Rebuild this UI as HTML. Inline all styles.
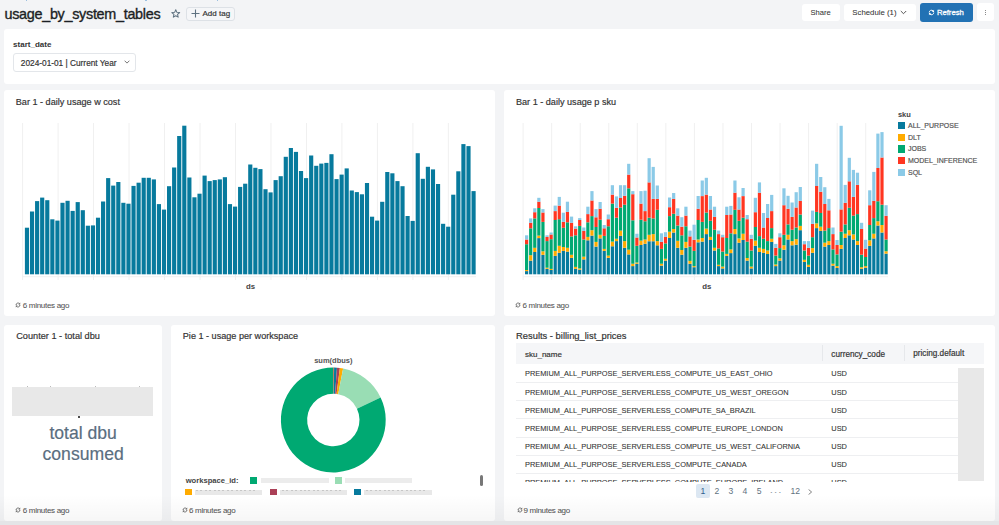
<!DOCTYPE html>
<html><head><meta charset="utf-8"><style>
html,body{margin:0;padding:0}
body{width:999px;height:525px;overflow:hidden;position:relative;background:#F3F4F6;font-family:"Liberation Sans",sans-serif;color:#333}
.p{position:absolute;background:#fff;border-radius:3px}
.t{position:absolute;white-space:nowrap;line-height:1;-webkit-text-stroke:0.18px currentColor}
.btn{position:absolute;background:#fff;border-radius:3px}
svg.abs{position:absolute;left:0;top:0}
</style></head><body>
<!-- header -->
<div style="position:absolute;left:26px;top:0;width:1.4px;height:1.2px;background:#9CC0E0"></div>
<div style="position:absolute;left:145px;top:0;width:2px;height:1.2px;background:#9CC0E0"></div>
<div style="position:absolute;left:216.5px;top:0;width:1.4px;height:1.2px;background:#9CC0E0"></div>
<div class="t" style="left:4.5px;top:6.6px;font-size:14.4px;color:#1B1F24;letter-spacing:-0.3px;-webkit-text-stroke:0.35px #1B1F24">usage_by_system_tables</div>
<svg style="position:absolute;left:171px;top:8.5px" width="9.5" height="9" viewBox="0 0 24 23"><path d="M12 2l2.9 6.6 7.1.6-5.4 4.7 1.6 7L12 17.2 5.8 20.9l1.6-7L2 9.2l7.1-.6z" fill="none" stroke="#5F7281" stroke-width="2.6" stroke-linejoin="round"/></svg>
<div class="btn" style="left:185.5px;top:6.5px;width:47.5px;height:12.8px;border:0.8px solid #DDE1E6;background:#F5F6F8"></div>
<svg style="position:absolute;left:190.5px;top:8.5px" width="9" height="9" viewBox="0 0 9 9"><path d="M4.5 0.5v8M0.5 4.5h8" stroke="#5F7281" stroke-width="1.1"/></svg>
<div class="t" style="left:202.5px;top:10.3px;font-size:8px;color:#333">Add tag</div>

<div class="btn" style="left:802px;top:3.6px;width:38px;height:17.4px"></div>
<div class="t" style="left:810.5px;top:9.3px;font-size:7.6px;color:#333;-webkit-text-stroke:0.05px #333">Share</div>
<div class="btn" style="left:843.6px;top:3.6px;width:72.4px;height:17.4px"></div>
<div class="t" style="left:852.3px;top:9.3px;font-size:7.8px;color:#333;-webkit-text-stroke:0.05px #333">Schedule (1)</div>
<svg style="position:absolute;left:900px;top:9.5px" width="7" height="5" viewBox="0 0 7 5"><path d="M0.8 1l2.7 2.7L6.2 1" fill="none" stroke="#444" stroke-width="0.9"/></svg>
<div class="btn" style="left:919.7px;top:2.9px;width:53.3px;height:18.8px;background:#2272B4"></div>
<svg style="position:absolute;left:927.7px;top:8.9px" width="7" height="7" viewBox="0 0 16 16"><path d="M2.8 8A5.2 5.2 0 0 1 11.7 4.3" fill="none" stroke="#fff" stroke-width="2.2"/><path d="M13.9 1.6v5h-5z" fill="#fff"/><path d="M13.2 8A5.2 5.2 0 0 1 4.3 11.7" fill="none" stroke="#fff" stroke-width="2.2"/><path d="M2.1 14.4v-5h5z" fill="#fff"/></svg>
<div class="t" style="left:936.9px;top:9.1px;font-size:7.7px;font-weight:400;color:#fff;-webkit-text-stroke:0.28px #fff">Refresh</div>
<div class="btn" style="left:977px;top:3.4px;width:17px;height:17.6px"></div>
<div style="position:absolute;left:984.6px;top:10px;width:1px;height:1px;background:#666;border-radius:50%"></div>
<div style="position:absolute;left:984.6px;top:12.2px;width:1px;height:1px;background:#666;border-radius:50%"></div>
<div style="position:absolute;left:984.6px;top:14.4px;width:1px;height:1px;background:#666;border-radius:50%"></div>

<!-- filter panel -->
<div class="p" style="left:4.3px;top:29.1px;height:54.8px;width:990.7px"></div>
<div class="t" style="left:13.1px;top:41.1px;font-size:8px;font-weight:700;color:#333;-webkit-text-stroke:0">start_date</div>
<div style="position:absolute;left:13.1px;top:53.3px;width:120.8px;height:16.8px;border:0.8px solid #E3E6EA;border-radius:3px;background:#fff"></div>
<div class="t" style="left:20.8px;top:58.8px;font-size:8.3px;color:#333">2024-01-01 | Current Year</div>
<svg style="position:absolute;left:123.5px;top:60px" width="6" height="4" viewBox="0 0 6 4"><path d="M0.6 0.7l2.4 2.4L5.4 0.7" fill="none" stroke="#555" stroke-width="0.8"/></svg>

<!-- bar panels -->
<div class="p" style="left:4.2px;top:90px;width:491.3px;height:225.5px"></div>
<div class="p" style="left:503.6px;top:90px;width:491.9px;height:225.5px"></div>
<div class="t" style="left:15.8px;top:97.7px;font-size:9.1px;color:#333">Bar 1 - daily usage w cost</div>
<div class="t" style="left:516px;top:97.7px;font-size:9.1px;color:#333">Bar 1 - daily usage p sku</div>
<svg class="abs" width="999" height="525">
<line x1="22.6" y1="123" x2="22.6" y2="280" stroke="#F0F0F0" stroke-width="1"/>
<line x1="58.08" y1="123" x2="58.08" y2="280" stroke="#F0F0F0" stroke-width="1"/>
<line x1="93.56" y1="123" x2="93.56" y2="280" stroke="#F0F0F0" stroke-width="1"/>
<line x1="129.04" y1="123" x2="129.04" y2="280" stroke="#F0F0F0" stroke-width="1"/>
<line x1="164.52" y1="123" x2="164.52" y2="280" stroke="#F0F0F0" stroke-width="1"/>
<line x1="200" y1="123" x2="200" y2="280" stroke="#F0F0F0" stroke-width="1"/>
<line x1="235.48" y1="123" x2="235.48" y2="280" stroke="#F0F0F0" stroke-width="1"/>
<line x1="270.96" y1="123" x2="270.96" y2="280" stroke="#F0F0F0" stroke-width="1"/>
<line x1="306.44" y1="123" x2="306.44" y2="280" stroke="#F0F0F0" stroke-width="1"/>
<line x1="341.92" y1="123" x2="341.92" y2="280" stroke="#F0F0F0" stroke-width="1"/>
<line x1="377.4" y1="123" x2="377.4" y2="280" stroke="#F0F0F0" stroke-width="1"/>
<line x1="412.88" y1="123" x2="412.88" y2="280" stroke="#F0F0F0" stroke-width="1"/>
<line x1="448.36" y1="123" x2="448.36" y2="280" stroke="#F0F0F0" stroke-width="1"/>
<line x1="22.6" y1="276.7" x2="476" y2="276.7" stroke="#F0F0F0" stroke-width="1"/>
<rect x="24.9" y="227.7" width="4.15" height="46.6" fill="#077A9D"/>
<rect x="29.97" y="211.5" width="4.15" height="62.8" fill="#077A9D"/>
<rect x="35.05" y="201.1" width="4.15" height="73.2" fill="#077A9D"/>
<rect x="40.12" y="197.6" width="4.15" height="76.7" fill="#077A9D"/>
<rect x="45.2" y="200.2" width="4.15" height="74.1" fill="#077A9D"/>
<rect x="50.27" y="219.3" width="4.15" height="55" fill="#077A9D"/>
<rect x="55.35" y="220.6" width="4.15" height="53.7" fill="#077A9D"/>
<rect x="60.42" y="202.8" width="4.15" height="71.5" fill="#077A9D"/>
<rect x="65.5" y="200.8" width="4.15" height="73.5" fill="#077A9D"/>
<rect x="70.58" y="210.9" width="4.15" height="63.4" fill="#077A9D"/>
<rect x="75.65" y="202.1" width="4.15" height="72.2" fill="#077A9D"/>
<rect x="80.72" y="210.2" width="4.15" height="64.1" fill="#077A9D"/>
<rect x="85.8" y="225.7" width="4.15" height="48.6" fill="#077A9D"/>
<rect x="90.88" y="225.4" width="4.15" height="48.9" fill="#077A9D"/>
<rect x="95.95" y="217.7" width="4.15" height="56.6" fill="#077A9D"/>
<rect x="101.03" y="201.5" width="4.15" height="72.8" fill="#077A9D"/>
<rect x="106.1" y="178.1" width="4.15" height="96.2" fill="#077A9D"/>
<rect x="111.18" y="185.6" width="4.15" height="88.7" fill="#077A9D"/>
<rect x="116.25" y="182" width="4.15" height="92.3" fill="#077A9D"/>
<rect x="121.32" y="202.8" width="4.15" height="71.5" fill="#077A9D"/>
<rect x="126.4" y="203.7" width="4.15" height="70.6" fill="#077A9D"/>
<rect x="131.47" y="185.9" width="4.15" height="88.4" fill="#077A9D"/>
<rect x="136.55" y="182.7" width="4.15" height="91.6" fill="#077A9D"/>
<rect x="141.62" y="177.8" width="4.15" height="96.5" fill="#077A9D"/>
<rect x="146.7" y="177.8" width="4.15" height="96.5" fill="#077A9D"/>
<rect x="151.78" y="179.4" width="4.15" height="94.9" fill="#077A9D"/>
<rect x="156.85" y="204.1" width="4.15" height="70.2" fill="#077A9D"/>
<rect x="161.93" y="209.6" width="4.15" height="64.7" fill="#077A9D"/>
<rect x="167" y="186.2" width="4.15" height="88.1" fill="#077A9D"/>
<rect x="172.08" y="167.5" width="4.15" height="106.8" fill="#077A9D"/>
<rect x="177.15" y="136" width="4.15" height="138.3" fill="#077A9D"/>
<rect x="182.23" y="125.7" width="4.15" height="148.6" fill="#077A9D"/>
<rect x="187.3" y="177.5" width="4.15" height="96.8" fill="#077A9D"/>
<rect x="192.38" y="197.3" width="4.15" height="77" fill="#077A9D"/>
<rect x="197.45" y="193.7" width="4.15" height="80.6" fill="#077A9D"/>
<rect x="202.53" y="175.6" width="4.15" height="98.7" fill="#077A9D"/>
<rect x="207.6" y="181.1" width="4.15" height="93.2" fill="#077A9D"/>
<rect x="212.68" y="180.1" width="4.15" height="94.2" fill="#077A9D"/>
<rect x="217.75" y="179.4" width="4.15" height="94.9" fill="#077A9D"/>
<rect x="222.83" y="177.2" width="4.15" height="97.1" fill="#077A9D"/>
<rect x="227.9" y="204.1" width="4.15" height="70.2" fill="#077A9D"/>
<rect x="232.98" y="206.6" width="4.15" height="67.7" fill="#077A9D"/>
<rect x="238.05" y="186.9" width="4.15" height="87.4" fill="#077A9D"/>
<rect x="243.12" y="183.7" width="4.15" height="90.6" fill="#077A9D"/>
<rect x="248.2" y="164.5" width="4.15" height="109.8" fill="#077A9D"/>
<rect x="253.28" y="167.8" width="4.15" height="106.5" fill="#077A9D"/>
<rect x="258.35" y="169.1" width="4.15" height="105.2" fill="#077A9D"/>
<rect x="263.43" y="189.2" width="4.15" height="85.1" fill="#077A9D"/>
<rect x="268.5" y="192.4" width="4.15" height="81.9" fill="#077A9D"/>
<rect x="273.57" y="180.1" width="4.15" height="94.2" fill="#077A9D"/>
<rect x="278.65" y="176.2" width="4.15" height="98.1" fill="#077A9D"/>
<rect x="283.72" y="156.8" width="4.15" height="117.5" fill="#077A9D"/>
<rect x="288.8" y="148" width="4.15" height="126.3" fill="#077A9D"/>
<rect x="293.88" y="151.9" width="4.15" height="122.4" fill="#077A9D"/>
<rect x="298.95" y="171" width="4.15" height="103.3" fill="#077A9D"/>
<rect x="304.02" y="178.1" width="4.15" height="96.2" fill="#077A9D"/>
<rect x="309.1" y="155.5" width="4.15" height="118.8" fill="#077A9D"/>
<rect x="314.18" y="165.8" width="4.15" height="108.5" fill="#077A9D"/>
<rect x="319.25" y="163.6" width="4.15" height="110.7" fill="#077A9D"/>
<rect x="324.32" y="162.9" width="4.15" height="111.4" fill="#077A9D"/>
<rect x="329.4" y="154.2" width="4.15" height="120.1" fill="#077A9D"/>
<rect x="334.47" y="179.1" width="4.15" height="95.2" fill="#077A9D"/>
<rect x="339.55" y="174.6" width="4.15" height="99.7" fill="#077A9D"/>
<rect x="344.62" y="168.4" width="4.15" height="105.9" fill="#077A9D"/>
<rect x="349.7" y="190.5" width="4.15" height="83.8" fill="#077A9D"/>
<rect x="354.77" y="192.1" width="4.15" height="82.2" fill="#077A9D"/>
<rect x="359.85" y="194.3" width="4.15" height="80" fill="#077A9D"/>
<rect x="364.93" y="183" width="4.15" height="91.3" fill="#077A9D"/>
<rect x="370" y="216.7" width="4.15" height="57.6" fill="#077A9D"/>
<rect x="375.07" y="220.6" width="4.15" height="53.7" fill="#077A9D"/>
<rect x="380.15" y="201.8" width="4.15" height="72.5" fill="#077A9D"/>
<rect x="385.22" y="172" width="4.15" height="102.3" fill="#077A9D"/>
<rect x="390.3" y="173.3" width="4.15" height="101" fill="#077A9D"/>
<rect x="395.38" y="181.1" width="4.15" height="93.2" fill="#077A9D"/>
<rect x="400.45" y="186.2" width="4.15" height="88.1" fill="#077A9D"/>
<rect x="405.52" y="216" width="4.15" height="58.3" fill="#077A9D"/>
<rect x="410.6" y="220.9" width="4.15" height="53.4" fill="#077A9D"/>
<rect x="415.68" y="153.2" width="4.15" height="121.1" fill="#077A9D"/>
<rect x="420.75" y="178.8" width="4.15" height="95.5" fill="#077A9D"/>
<rect x="425.82" y="166.8" width="4.15" height="107.5" fill="#077A9D"/>
<rect x="430.9" y="169.4" width="4.15" height="104.9" fill="#077A9D"/>
<rect x="435.97" y="184" width="4.15" height="90.3" fill="#077A9D"/>
<rect x="441.05" y="223.8" width="4.15" height="50.5" fill="#077A9D"/>
<rect x="446.12" y="226.7" width="4.15" height="47.6" fill="#077A9D"/>
<rect x="451.2" y="194.7" width="4.15" height="79.6" fill="#077A9D"/>
<rect x="456.27" y="171.3" width="4.15" height="103" fill="#077A9D"/>
<rect x="461.35" y="144.1" width="4.15" height="130.2" fill="#077A9D"/>
<rect x="466.43" y="146.1" width="4.15" height="128.2" fill="#077A9D"/>
<rect x="471.5" y="191.1" width="4.15" height="83.2" fill="#077A9D"/>
<line x1="523.1" y1="123" x2="523.1" y2="280" stroke="#F0F0F0" stroke-width="1"/>
<line x1="551.65" y1="123" x2="551.65" y2="280" stroke="#F0F0F0" stroke-width="1"/>
<line x1="580.2" y1="123" x2="580.2" y2="280" stroke="#F0F0F0" stroke-width="1"/>
<line x1="608.75" y1="123" x2="608.75" y2="280" stroke="#F0F0F0" stroke-width="1"/>
<line x1="637.3" y1="123" x2="637.3" y2="280" stroke="#F0F0F0" stroke-width="1"/>
<line x1="665.85" y1="123" x2="665.85" y2="280" stroke="#F0F0F0" stroke-width="1"/>
<line x1="694.4" y1="123" x2="694.4" y2="280" stroke="#F0F0F0" stroke-width="1"/>
<line x1="722.95" y1="123" x2="722.95" y2="280" stroke="#F0F0F0" stroke-width="1"/>
<line x1="751.5" y1="123" x2="751.5" y2="280" stroke="#F0F0F0" stroke-width="1"/>
<line x1="780.05" y1="123" x2="780.05" y2="280" stroke="#F0F0F0" stroke-width="1"/>
<line x1="808.6" y1="123" x2="808.6" y2="280" stroke="#F0F0F0" stroke-width="1"/>
<line x1="837.15" y1="123" x2="837.15" y2="280" stroke="#F0F0F0" stroke-width="1"/>
<line x1="865.7" y1="123" x2="865.7" y2="280" stroke="#F0F0F0" stroke-width="1"/>
<line x1="523" y1="276.7" x2="888" y2="276.7" stroke="#F0F0F0" stroke-width="1"/>
<rect x="525" y="271.1" width="3.2" height="3.2" fill="#077A9D"/>
<rect x="525" y="270" width="3.2" height="1.1" fill="#FFAB00"/>
<rect x="525" y="244.2" width="3.2" height="25.8" fill="#00A972"/>
<rect x="525" y="239.5" width="3.2" height="4.7" fill="#FF3621"/>
<rect x="525" y="235.3" width="3.2" height="4.2" fill="#8BCAE7"/>
<rect x="529.09" y="260.6" width="3.2" height="13.7" fill="#077A9D"/>
<rect x="529.09" y="255.2" width="3.2" height="5.4" fill="#FFAB00"/>
<rect x="529.09" y="228.3" width="3.2" height="26.9" fill="#00A972"/>
<rect x="529.09" y="222.8" width="3.2" height="5.5" fill="#FF3621"/>
<rect x="529.09" y="218.4" width="3.2" height="4.4" fill="#8BCAE7"/>
<rect x="533.17" y="252" width="3.2" height="22.3" fill="#077A9D"/>
<rect x="533.17" y="247.8" width="3.2" height="4.2" fill="#FFAB00"/>
<rect x="533.17" y="218.4" width="3.2" height="29.4" fill="#00A972"/>
<rect x="533.17" y="212.2" width="3.2" height="6.2" fill="#FF3621"/>
<rect x="533.17" y="208.3" width="3.2" height="3.9" fill="#8BCAE7"/>
<rect x="537.25" y="238.1" width="3.2" height="36.2" fill="#077A9D"/>
<rect x="537.25" y="235.6" width="3.2" height="2.5" fill="#FFAB00"/>
<rect x="537.25" y="208" width="3.2" height="27.6" fill="#00A972"/>
<rect x="537.25" y="201.7" width="3.2" height="6.3" fill="#FF3621"/>
<rect x="537.25" y="197.8" width="3.2" height="3.9" fill="#8BCAE7"/>
<rect x="541.34" y="254.8" width="3.2" height="19.5" fill="#077A9D"/>
<rect x="541.34" y="251.3" width="3.2" height="3.5" fill="#FFAB00"/>
<rect x="541.34" y="221.9" width="3.2" height="29.4" fill="#00A972"/>
<rect x="541.34" y="212.5" width="3.2" height="9.4" fill="#FF3621"/>
<rect x="541.34" y="209.1" width="3.2" height="3.4" fill="#8BCAE7"/>
<rect x="545.42" y="268.8" width="3.2" height="5.5" fill="#077A9D"/>
<rect x="545.42" y="267.7" width="3.2" height="1.1" fill="#FFAB00"/>
<rect x="545.42" y="241.1" width="3.2" height="26.6" fill="#00A972"/>
<rect x="545.42" y="236.9" width="3.2" height="4.2" fill="#FF3621"/>
<rect x="545.42" y="235.3" width="3.2" height="1.6" fill="#8BCAE7"/>
<rect x="549.51" y="270" width="3.2" height="4.3" fill="#077A9D"/>
<rect x="549.51" y="268.9" width="3.2" height="1.1" fill="#FFAB00"/>
<rect x="549.51" y="239.2" width="3.2" height="29.7" fill="#00A972"/>
<rect x="549.51" y="234.5" width="3.2" height="4.7" fill="#FF3621"/>
<rect x="549.51" y="232.5" width="3.2" height="2" fill="#8BCAE7"/>
<rect x="553.6" y="255.9" width="3.2" height="18.4" fill="#077A9D"/>
<rect x="553.6" y="250.9" width="3.2" height="5" fill="#FFAB00"/>
<rect x="553.6" y="220" width="3.2" height="30.9" fill="#00A972"/>
<rect x="553.6" y="211.1" width="3.2" height="8.9" fill="#FF3621"/>
<rect x="553.6" y="205.6" width="3.2" height="5.5" fill="#8BCAE7"/>
<rect x="557.68" y="252.8" width="3.2" height="21.5" fill="#077A9D"/>
<rect x="557.68" y="245.8" width="3.2" height="7" fill="#FFAB00"/>
<rect x="557.68" y="219.2" width="3.2" height="26.6" fill="#00A972"/>
<rect x="557.68" y="205.6" width="3.2" height="13.6" fill="#FF3621"/>
<rect x="557.68" y="196.9" width="3.2" height="8.7" fill="#8BCAE7"/>
<rect x="561.76" y="250.9" width="3.2" height="23.4" fill="#077A9D"/>
<rect x="561.76" y="247" width="3.2" height="3.9" fill="#FFAB00"/>
<rect x="561.76" y="227.8" width="3.2" height="19.2" fill="#00A972"/>
<rect x="561.76" y="221.9" width="3.2" height="5.9" fill="#FF3621"/>
<rect x="561.76" y="212.7" width="3.2" height="9.2" fill="#8BCAE7"/>
<rect x="565.85" y="251.6" width="3.2" height="22.7" fill="#077A9D"/>
<rect x="565.85" y="247.8" width="3.2" height="3.8" fill="#FFAB00"/>
<rect x="565.85" y="222.3" width="3.2" height="25.5" fill="#00A972"/>
<rect x="565.85" y="211.9" width="3.2" height="10.4" fill="#FF3621"/>
<rect x="565.85" y="201.7" width="3.2" height="10.2" fill="#8BCAE7"/>
<rect x="569.93" y="257.8" width="3.2" height="16.5" fill="#077A9D"/>
<rect x="569.93" y="254.8" width="3.2" height="3" fill="#FFAB00"/>
<rect x="569.93" y="236.4" width="3.2" height="18.4" fill="#00A972"/>
<rect x="569.93" y="222.8" width="3.2" height="13.6" fill="#FF3621"/>
<rect x="569.93" y="216.6" width="3.2" height="6.2" fill="#8BCAE7"/>
<rect x="574.02" y="268.8" width="3.2" height="5.5" fill="#077A9D"/>
<rect x="574.02" y="266.9" width="3.2" height="1.9" fill="#FFAB00"/>
<rect x="574.02" y="235.3" width="3.2" height="31.6" fill="#00A972"/>
<rect x="574.02" y="228.6" width="3.2" height="6.7" fill="#FF3621"/>
<rect x="574.02" y="226.3" width="3.2" height="2.3" fill="#8BCAE7"/>
<rect x="578.11" y="269.7" width="3.2" height="4.6" fill="#077A9D"/>
<rect x="578.11" y="268.4" width="3.2" height="1.3" fill="#FFAB00"/>
<rect x="578.11" y="225.9" width="3.2" height="42.5" fill="#00A972"/>
<rect x="578.11" y="220" width="3.2" height="5.9" fill="#FF3621"/>
<rect x="578.11" y="218.1" width="3.2" height="1.9" fill="#8BCAE7"/>
<rect x="582.19" y="259.4" width="3.2" height="14.9" fill="#077A9D"/>
<rect x="582.19" y="256.7" width="3.2" height="2.7" fill="#FFAB00"/>
<rect x="582.19" y="239.5" width="3.2" height="17.2" fill="#00A972"/>
<rect x="582.19" y="230.9" width="3.2" height="8.6" fill="#FF3621"/>
<rect x="582.19" y="227.5" width="3.2" height="3.4" fill="#8BCAE7"/>
<rect x="586.27" y="240.3" width="3.2" height="34" fill="#077A9D"/>
<rect x="586.27" y="236.9" width="3.2" height="3.4" fill="#FFAB00"/>
<rect x="586.27" y="222.3" width="3.2" height="14.6" fill="#00A972"/>
<rect x="586.27" y="214.1" width="3.2" height="8.2" fill="#FF3621"/>
<rect x="586.27" y="206.7" width="3.2" height="7.4" fill="#8BCAE7"/>
<rect x="590.36" y="235.6" width="3.2" height="38.7" fill="#077A9D"/>
<rect x="590.36" y="230.2" width="3.2" height="5.4" fill="#FFAB00"/>
<rect x="590.36" y="216.1" width="3.2" height="14.1" fill="#00A972"/>
<rect x="590.36" y="200.5" width="3.2" height="15.6" fill="#FF3621"/>
<rect x="590.36" y="191.1" width="3.2" height="9.4" fill="#8BCAE7"/>
<rect x="594.44" y="246.6" width="3.2" height="27.7" fill="#077A9D"/>
<rect x="594.44" y="241.9" width="3.2" height="4.7" fill="#FFAB00"/>
<rect x="594.44" y="227" width="3.2" height="14.9" fill="#00A972"/>
<rect x="594.44" y="217.3" width="3.2" height="9.7" fill="#FF3621"/>
<rect x="594.44" y="209.1" width="3.2" height="8.2" fill="#8BCAE7"/>
<rect x="598.53" y="238.4" width="3.2" height="35.9" fill="#077A9D"/>
<rect x="598.53" y="234.8" width="3.2" height="3.6" fill="#FFAB00"/>
<rect x="598.53" y="219.7" width="3.2" height="15.1" fill="#00A972"/>
<rect x="598.53" y="208.75" width="3.2" height="10.95" fill="#FF3621"/>
<rect x="598.53" y="202" width="3.2" height="6.75" fill="#8BCAE7"/>
<rect x="602.62" y="250.9" width="3.2" height="23.4" fill="#077A9D"/>
<rect x="602.62" y="248.9" width="3.2" height="2" fill="#FFAB00"/>
<rect x="602.62" y="235.9" width="3.2" height="13" fill="#00A972"/>
<rect x="602.62" y="228.3" width="3.2" height="7.6" fill="#FF3621"/>
<rect x="602.62" y="225" width="3.2" height="3.3" fill="#8BCAE7"/>
<rect x="606.7" y="257.8" width="3.2" height="16.5" fill="#077A9D"/>
<rect x="606.7" y="255.6" width="3.2" height="2.2" fill="#FFAB00"/>
<rect x="606.7" y="226.25" width="3.2" height="29.35" fill="#00A972"/>
<rect x="606.7" y="219.2" width="3.2" height="7.05" fill="#FF3621"/>
<rect x="606.7" y="214.5" width="3.2" height="4.7" fill="#8BCAE7"/>
<rect x="610.78" y="246.25" width="3.2" height="28.05" fill="#077A9D"/>
<rect x="610.78" y="241.6" width="3.2" height="4.65" fill="#FFAB00"/>
<rect x="610.78" y="203.6" width="3.2" height="38" fill="#00A972"/>
<rect x="610.78" y="194.6" width="3.2" height="9" fill="#FF3621"/>
<rect x="610.78" y="185.2" width="3.2" height="9.4" fill="#8BCAE7"/>
<rect x="614.87" y="241.1" width="3.2" height="33.2" fill="#077A9D"/>
<rect x="614.87" y="238.75" width="3.2" height="2.35" fill="#FFAB00"/>
<rect x="614.87" y="217.7" width="3.2" height="21.05" fill="#00A972"/>
<rect x="614.87" y="207.8" width="3.2" height="9.9" fill="#FF3621"/>
<rect x="614.87" y="196.4" width="3.2" height="11.4" fill="#8BCAE7"/>
<rect x="618.96" y="235.9" width="3.2" height="38.4" fill="#077A9D"/>
<rect x="618.96" y="230.6" width="3.2" height="5.3" fill="#FFAB00"/>
<rect x="618.96" y="207.5" width="3.2" height="23.1" fill="#00A972"/>
<rect x="618.96" y="198" width="3.2" height="9.5" fill="#FF3621"/>
<rect x="618.96" y="185.2" width="3.2" height="12.8" fill="#8BCAE7"/>
<rect x="623.04" y="247.8" width="3.2" height="26.5" fill="#077A9D"/>
<rect x="623.04" y="241.1" width="3.2" height="6.7" fill="#FFAB00"/>
<rect x="623.04" y="204.7" width="3.2" height="36.4" fill="#00A972"/>
<rect x="623.04" y="195.8" width="3.2" height="8.9" fill="#FF3621"/>
<rect x="623.04" y="185.2" width="3.2" height="10.6" fill="#8BCAE7"/>
<rect x="627.12" y="254.4" width="3.2" height="19.9" fill="#077A9D"/>
<rect x="627.12" y="249.7" width="3.2" height="4.7" fill="#FFAB00"/>
<rect x="627.12" y="188.3" width="3.2" height="61.4" fill="#00A972"/>
<rect x="627.12" y="174.6" width="3.2" height="13.7" fill="#FF3621"/>
<rect x="627.12" y="163.8" width="3.2" height="10.8" fill="#8BCAE7"/>
<rect x="631.21" y="266.1" width="3.2" height="8.2" fill="#077A9D"/>
<rect x="631.21" y="263.75" width="3.2" height="2.35" fill="#FFAB00"/>
<rect x="631.21" y="220.3" width="3.2" height="43.45" fill="#00A972"/>
<rect x="631.21" y="194.2" width="3.2" height="26.1" fill="#FF3621"/>
<rect x="631.21" y="191.1" width="3.2" height="3.1" fill="#8BCAE7"/>
<rect x="635.29" y="263.75" width="3.2" height="10.55" fill="#077A9D"/>
<rect x="635.29" y="262.5" width="3.2" height="1.25" fill="#FFAB00"/>
<rect x="635.29" y="245.8" width="3.2" height="16.7" fill="#00A972"/>
<rect x="635.29" y="237.5" width="3.2" height="8.3" fill="#FF3621"/>
<rect x="635.29" y="233.75" width="3.2" height="3.75" fill="#8BCAE7"/>
<rect x="639.38" y="245" width="3.2" height="29.3" fill="#077A9D"/>
<rect x="639.38" y="240.6" width="3.2" height="4.4" fill="#FFAB00"/>
<rect x="639.38" y="219.7" width="3.2" height="20.9" fill="#00A972"/>
<rect x="639.38" y="203.6" width="3.2" height="16.1" fill="#FF3621"/>
<rect x="639.38" y="191.1" width="3.2" height="12.5" fill="#8BCAE7"/>
<rect x="643.47" y="243.75" width="3.2" height="30.55" fill="#077A9D"/>
<rect x="643.47" y="239.5" width="3.2" height="4.25" fill="#FFAB00"/>
<rect x="643.47" y="221.25" width="3.2" height="18.25" fill="#00A972"/>
<rect x="643.47" y="211.1" width="3.2" height="10.15" fill="#FF3621"/>
<rect x="643.47" y="190.7" width="3.2" height="20.4" fill="#8BCAE7"/>
<rect x="647.55" y="241.25" width="3.2" height="33.05" fill="#077A9D"/>
<rect x="647.55" y="234.8" width="3.2" height="6.45" fill="#FFAB00"/>
<rect x="647.55" y="217.7" width="3.2" height="17.1" fill="#00A972"/>
<rect x="647.55" y="182.4" width="3.2" height="35.3" fill="#FF3621"/>
<rect x="647.55" y="158.2" width="3.2" height="24.2" fill="#8BCAE7"/>
<rect x="651.63" y="241.25" width="3.2" height="33.05" fill="#077A9D"/>
<rect x="651.63" y="234.1" width="3.2" height="7.15" fill="#FFAB00"/>
<rect x="651.63" y="218.4" width="3.2" height="15.7" fill="#00A972"/>
<rect x="651.63" y="198.9" width="3.2" height="19.5" fill="#FF3621"/>
<rect x="651.63" y="166.9" width="3.2" height="32" fill="#8BCAE7"/>
<rect x="655.72" y="245.3" width="3.2" height="29" fill="#077A9D"/>
<rect x="655.72" y="241.1" width="3.2" height="4.2" fill="#FFAB00"/>
<rect x="655.72" y="209.8" width="3.2" height="31.3" fill="#00A972"/>
<rect x="655.72" y="198.9" width="3.2" height="10.9" fill="#FF3621"/>
<rect x="655.72" y="185.5" width="3.2" height="13.4" fill="#8BCAE7"/>
<rect x="659.81" y="265.6" width="3.2" height="8.7" fill="#077A9D"/>
<rect x="659.81" y="263.75" width="3.2" height="1.85" fill="#FFAB00"/>
<rect x="659.81" y="248.9" width="3.2" height="14.85" fill="#00A972"/>
<rect x="659.81" y="241.9" width="3.2" height="7" fill="#FF3621"/>
<rect x="659.81" y="233.3" width="3.2" height="8.6" fill="#8BCAE7"/>
<rect x="663.89" y="260.6" width="3.2" height="13.7" fill="#077A9D"/>
<rect x="663.89" y="258.75" width="3.2" height="1.85" fill="#FFAB00"/>
<rect x="663.89" y="243.4" width="3.2" height="15.35" fill="#00A972"/>
<rect x="663.89" y="236.9" width="3.2" height="6.5" fill="#FF3621"/>
<rect x="663.89" y="232.2" width="3.2" height="4.7" fill="#8BCAE7"/>
<rect x="667.98" y="238" width="3.2" height="36.3" fill="#077A9D"/>
<rect x="667.98" y="231.7" width="3.2" height="6.3" fill="#FFAB00"/>
<rect x="667.98" y="216.1" width="3.2" height="15.6" fill="#00A972"/>
<rect x="667.98" y="207.2" width="3.2" height="8.9" fill="#FF3621"/>
<rect x="667.98" y="197.5" width="3.2" height="9.7" fill="#8BCAE7"/>
<rect x="672.06" y="232.5" width="3.2" height="41.8" fill="#077A9D"/>
<rect x="672.06" y="229" width="3.2" height="3.5" fill="#FFAB00"/>
<rect x="672.06" y="213.75" width="3.2" height="15.25" fill="#00A972"/>
<rect x="672.06" y="198.9" width="3.2" height="14.85" fill="#FF3621"/>
<rect x="672.06" y="193" width="3.2" height="5.9" fill="#8BCAE7"/>
<rect x="676.14" y="247.8" width="3.2" height="26.5" fill="#077A9D"/>
<rect x="676.14" y="240.8" width="3.2" height="7" fill="#FFAB00"/>
<rect x="676.14" y="225.5" width="3.2" height="15.3" fill="#00A972"/>
<rect x="676.14" y="215.6" width="3.2" height="9.9" fill="#FF3621"/>
<rect x="676.14" y="208.3" width="3.2" height="7.3" fill="#8BCAE7"/>
<rect x="680.23" y="254.7" width="3.2" height="19.6" fill="#077A9D"/>
<rect x="680.23" y="250" width="3.2" height="4.7" fill="#FFAB00"/>
<rect x="680.23" y="235.3" width="3.2" height="14.7" fill="#00A972"/>
<rect x="680.23" y="226.7" width="3.2" height="8.6" fill="#FF3621"/>
<rect x="680.23" y="217.2" width="3.2" height="9.5" fill="#8BCAE7"/>
<rect x="684.32" y="247.8" width="3.2" height="26.5" fill="#077A9D"/>
<rect x="684.32" y="241.9" width="3.2" height="5.9" fill="#FFAB00"/>
<rect x="684.32" y="226.25" width="3.2" height="15.65" fill="#00A972"/>
<rect x="684.32" y="215.6" width="3.2" height="10.65" fill="#FF3621"/>
<rect x="684.32" y="206.7" width="3.2" height="8.9" fill="#8BCAE7"/>
<rect x="688.4" y="263.75" width="3.2" height="10.55" fill="#077A9D"/>
<rect x="688.4" y="260.9" width="3.2" height="2.85" fill="#FFAB00"/>
<rect x="688.4" y="246.6" width="3.2" height="14.3" fill="#00A972"/>
<rect x="688.4" y="236.4" width="3.2" height="10.2" fill="#FF3621"/>
<rect x="688.4" y="230.6" width="3.2" height="5.8" fill="#8BCAE7"/>
<rect x="692.49" y="267.2" width="3.2" height="7.1" fill="#077A9D"/>
<rect x="692.49" y="266.1" width="3.2" height="1.1" fill="#FFAB00"/>
<rect x="692.49" y="250.9" width="3.2" height="15.2" fill="#00A972"/>
<rect x="692.49" y="239.8" width="3.2" height="11.1" fill="#FF3621"/>
<rect x="692.49" y="224.7" width="3.2" height="15.1" fill="#8BCAE7"/>
<rect x="696.57" y="242.3" width="3.2" height="32" fill="#077A9D"/>
<rect x="696.57" y="239.5" width="3.2" height="2.8" fill="#FFAB00"/>
<rect x="696.57" y="220" width="3.2" height="19.5" fill="#00A972"/>
<rect x="696.57" y="208.75" width="3.2" height="11.25" fill="#FF3621"/>
<rect x="696.57" y="196" width="3.2" height="12.75" fill="#8BCAE7"/>
<rect x="700.65" y="241.6" width="3.2" height="32.7" fill="#077A9D"/>
<rect x="700.65" y="238" width="3.2" height="3.6" fill="#FFAB00"/>
<rect x="700.65" y="221.9" width="3.2" height="16.1" fill="#00A972"/>
<rect x="700.65" y="196.1" width="3.2" height="25.8" fill="#FF3621"/>
<rect x="700.65" y="180.5" width="3.2" height="15.6" fill="#8BCAE7"/>
<rect x="704.74" y="234.1" width="3.2" height="40.2" fill="#077A9D"/>
<rect x="704.74" y="228.6" width="3.2" height="5.5" fill="#FFAB00"/>
<rect x="704.74" y="212.5" width="3.2" height="16.1" fill="#00A972"/>
<rect x="704.74" y="194.6" width="3.2" height="17.9" fill="#FF3621"/>
<rect x="704.74" y="177.8" width="3.2" height="16.8" fill="#8BCAE7"/>
<rect x="708.83" y="240" width="3.2" height="34.3" fill="#077A9D"/>
<rect x="708.83" y="236.9" width="3.2" height="3.1" fill="#FFAB00"/>
<rect x="708.83" y="220.8" width="3.2" height="16.1" fill="#00A972"/>
<rect x="708.83" y="209.5" width="3.2" height="11.3" fill="#FF3621"/>
<rect x="708.83" y="196" width="3.2" height="13.5" fill="#8BCAE7"/>
<rect x="712.91" y="250.5" width="3.2" height="23.8" fill="#077A9D"/>
<rect x="712.91" y="247.8" width="3.2" height="2.7" fill="#FFAB00"/>
<rect x="712.91" y="229.7" width="3.2" height="18.1" fill="#00A972"/>
<rect x="712.91" y="216.9" width="3.2" height="12.8" fill="#FF3621"/>
<rect x="712.91" y="206.7" width="3.2" height="10.2" fill="#8BCAE7"/>
<rect x="717" y="266.1" width="3.2" height="8.2" fill="#077A9D"/>
<rect x="717" y="264.8" width="3.2" height="1.3" fill="#FFAB00"/>
<rect x="717" y="248.4" width="3.2" height="16.4" fill="#00A972"/>
<rect x="717" y="234.1" width="3.2" height="14.3" fill="#FF3621"/>
<rect x="717" y="230.6" width="3.2" height="3.5" fill="#8BCAE7"/>
<rect x="721.08" y="268.4" width="3.2" height="5.9" fill="#077A9D"/>
<rect x="721.08" y="266.6" width="3.2" height="1.8" fill="#FFAB00"/>
<rect x="721.08" y="251.6" width="3.2" height="15" fill="#00A972"/>
<rect x="721.08" y="237.2" width="3.2" height="14.4" fill="#FF3621"/>
<rect x="721.08" y="234.8" width="3.2" height="2.4" fill="#8BCAE7"/>
<rect x="725.16" y="255.9" width="3.2" height="18.4" fill="#077A9D"/>
<rect x="725.16" y="253.9" width="3.2" height="2" fill="#FFAB00"/>
<rect x="725.16" y="238" width="3.2" height="15.9" fill="#00A972"/>
<rect x="725.16" y="215" width="3.2" height="23" fill="#FF3621"/>
<rect x="725.16" y="206.7" width="3.2" height="8.3" fill="#8BCAE7"/>
<rect x="729.25" y="253.1" width="3.2" height="21.2" fill="#077A9D"/>
<rect x="729.25" y="249.4" width="3.2" height="3.7" fill="#FFAB00"/>
<rect x="729.25" y="233.3" width="3.2" height="16.1" fill="#00A972"/>
<rect x="729.25" y="214.5" width="3.2" height="18.8" fill="#FF3621"/>
<rect x="729.25" y="205.9" width="3.2" height="8.6" fill="#8BCAE7"/>
<rect x="733.34" y="234.1" width="3.2" height="40.2" fill="#077A9D"/>
<rect x="733.34" y="229" width="3.2" height="5.1" fill="#FFAB00"/>
<rect x="733.34" y="209.8" width="3.2" height="19.2" fill="#00A972"/>
<rect x="733.34" y="192.7" width="3.2" height="17.1" fill="#FF3621"/>
<rect x="733.34" y="180.5" width="3.2" height="12.2" fill="#8BCAE7"/>
<rect x="737.42" y="242.7" width="3.2" height="31.6" fill="#077A9D"/>
<rect x="737.42" y="238.4" width="3.2" height="4.3" fill="#FFAB00"/>
<rect x="737.42" y="220.8" width="3.2" height="17.6" fill="#00A972"/>
<rect x="737.42" y="209.5" width="3.2" height="11.3" fill="#FF3621"/>
<rect x="737.42" y="197.3" width="3.2" height="12.2" fill="#8BCAE7"/>
<rect x="741.5" y="240" width="3.2" height="34.3" fill="#077A9D"/>
<rect x="741.5" y="233.75" width="3.2" height="6.25" fill="#FFAB00"/>
<rect x="741.5" y="217.7" width="3.2" height="16.05" fill="#00A972"/>
<rect x="741.5" y="196.1" width="3.2" height="21.6" fill="#FF3621"/>
<rect x="741.5" y="188" width="3.2" height="8.1" fill="#8BCAE7"/>
<rect x="745.59" y="260.6" width="3.2" height="13.7" fill="#077A9D"/>
<rect x="745.59" y="258" width="3.2" height="2.6" fill="#FFAB00"/>
<rect x="745.59" y="241.6" width="3.2" height="16.4" fill="#00A972"/>
<rect x="745.59" y="219.2" width="3.2" height="22.4" fill="#FF3621"/>
<rect x="745.59" y="215" width="3.2" height="4.2" fill="#8BCAE7"/>
<rect x="749.67" y="268.4" width="3.2" height="5.9" fill="#077A9D"/>
<rect x="749.67" y="266.6" width="3.2" height="1.8" fill="#FFAB00"/>
<rect x="749.67" y="250.5" width="3.2" height="16.1" fill="#00A972"/>
<rect x="749.67" y="238.75" width="3.2" height="11.75" fill="#FF3621"/>
<rect x="749.67" y="234.8" width="3.2" height="3.95" fill="#8BCAE7"/>
<rect x="753.76" y="245.8" width="3.2" height="28.5" fill="#077A9D"/>
<rect x="753.76" y="240.6" width="3.2" height="5.2" fill="#FFAB00"/>
<rect x="753.76" y="227" width="3.2" height="13.6" fill="#00A972"/>
<rect x="753.76" y="212.2" width="3.2" height="14.8" fill="#FF3621"/>
<rect x="753.76" y="197.8" width="3.2" height="14.4" fill="#8BCAE7"/>
<rect x="757.85" y="252" width="3.2" height="22.3" fill="#077A9D"/>
<rect x="757.85" y="247.8" width="3.2" height="4.2" fill="#FFAB00"/>
<rect x="757.85" y="236.1" width="3.2" height="11.7" fill="#00A972"/>
<rect x="757.85" y="192.7" width="3.2" height="43.4" fill="#FF3621"/>
<rect x="757.85" y="182.4" width="3.2" height="10.3" fill="#8BCAE7"/>
<rect x="761.93" y="252.8" width="3.2" height="21.5" fill="#077A9D"/>
<rect x="761.93" y="248.9" width="3.2" height="3.9" fill="#FFAB00"/>
<rect x="761.93" y="238.75" width="3.2" height="10.15" fill="#00A972"/>
<rect x="761.93" y="227.5" width="3.2" height="11.25" fill="#FF3621"/>
<rect x="761.93" y="213" width="3.2" height="14.5" fill="#8BCAE7"/>
<rect x="766.01" y="254" width="3.2" height="20.3" fill="#077A9D"/>
<rect x="766.01" y="250.5" width="3.2" height="3.5" fill="#FFAB00"/>
<rect x="766.01" y="241.1" width="3.2" height="9.4" fill="#00A972"/>
<rect x="766.01" y="218" width="3.2" height="23.1" fill="#FF3621"/>
<rect x="766.01" y="204" width="3.2" height="14" fill="#8BCAE7"/>
<rect x="770.1" y="241.9" width="3.2" height="32.4" fill="#077A9D"/>
<rect x="770.1" y="238.75" width="3.2" height="3.15" fill="#FFAB00"/>
<rect x="770.1" y="228.1" width="3.2" height="10.65" fill="#00A972"/>
<rect x="770.1" y="211.1" width="3.2" height="17" fill="#FF3621"/>
<rect x="770.1" y="194.9" width="3.2" height="16.2" fill="#8BCAE7"/>
<rect x="774.18" y="266.1" width="3.2" height="8.2" fill="#077A9D"/>
<rect x="774.18" y="264.5" width="3.2" height="1.6" fill="#FFAB00"/>
<rect x="774.18" y="255.6" width="3.2" height="8.9" fill="#00A972"/>
<rect x="774.18" y="247.8" width="3.2" height="7.8" fill="#FF3621"/>
<rect x="774.18" y="243.9" width="3.2" height="3.9" fill="#8BCAE7"/>
<rect x="778.27" y="260.6" width="3.2" height="13.7" fill="#077A9D"/>
<rect x="778.27" y="258.3" width="3.2" height="2.3" fill="#FFAB00"/>
<rect x="778.27" y="248.1" width="3.2" height="10.2" fill="#00A972"/>
<rect x="778.27" y="237.2" width="3.2" height="10.9" fill="#FF3621"/>
<rect x="778.27" y="233.3" width="3.2" height="3.9" fill="#8BCAE7"/>
<rect x="782.36" y="249.7" width="3.2" height="24.6" fill="#077A9D"/>
<rect x="782.36" y="245.3" width="3.2" height="4.4" fill="#FFAB00"/>
<rect x="782.36" y="234.8" width="3.2" height="10.5" fill="#00A972"/>
<rect x="782.36" y="205.2" width="3.2" height="29.6" fill="#FF3621"/>
<rect x="782.36" y="188.3" width="3.2" height="16.9" fill="#8BCAE7"/>
<rect x="786.44" y="239.5" width="3.2" height="34.8" fill="#077A9D"/>
<rect x="786.44" y="234.8" width="3.2" height="4.7" fill="#FFAB00"/>
<rect x="786.44" y="224.4" width="3.2" height="10.4" fill="#00A972"/>
<rect x="786.44" y="208.75" width="3.2" height="15.65" fill="#FF3621"/>
<rect x="786.44" y="195.8" width="3.2" height="12.95" fill="#8BCAE7"/>
<rect x="790.52" y="245.3" width="3.2" height="29" fill="#077A9D"/>
<rect x="790.52" y="241.1" width="3.2" height="4.2" fill="#FFAB00"/>
<rect x="790.52" y="229.7" width="3.2" height="11.4" fill="#00A972"/>
<rect x="790.52" y="216.9" width="3.2" height="12.8" fill="#FF3621"/>
<rect x="790.52" y="202.5" width="3.2" height="14.4" fill="#8BCAE7"/>
<rect x="794.61" y="244.7" width="3.2" height="29.6" fill="#077A9D"/>
<rect x="794.61" y="239.1" width="3.2" height="5.6" fill="#FFAB00"/>
<rect x="794.61" y="227.5" width="3.2" height="11.6" fill="#00A972"/>
<rect x="794.61" y="207.5" width="3.2" height="20" fill="#FF3621"/>
<rect x="794.61" y="192.2" width="3.2" height="15.3" fill="#8BCAE7"/>
<rect x="798.69" y="230.2" width="3.2" height="44.1" fill="#077A9D"/>
<rect x="798.69" y="225.9" width="3.2" height="4.3" fill="#FFAB00"/>
<rect x="798.69" y="214.5" width="3.2" height="11.4" fill="#00A972"/>
<rect x="798.69" y="200.9" width="3.2" height="13.6" fill="#FF3621"/>
<rect x="798.69" y="187" width="3.2" height="13.9" fill="#8BCAE7"/>
<rect x="802.78" y="261.9" width="3.2" height="12.4" fill="#077A9D"/>
<rect x="802.78" y="259.8" width="3.2" height="2.1" fill="#FFAB00"/>
<rect x="802.78" y="250.5" width="3.2" height="9.3" fill="#00A972"/>
<rect x="802.78" y="244.2" width="3.2" height="6.3" fill="#FF3621"/>
<rect x="802.78" y="241.1" width="3.2" height="3.1" fill="#8BCAE7"/>
<rect x="806.87" y="266.9" width="3.2" height="7.4" fill="#077A9D"/>
<rect x="806.87" y="264.8" width="3.2" height="2.1" fill="#FFAB00"/>
<rect x="806.87" y="255.6" width="3.2" height="9.2" fill="#00A972"/>
<rect x="806.87" y="247.8" width="3.2" height="7.8" fill="#FF3621"/>
<rect x="806.87" y="241.1" width="3.2" height="6.7" fill="#8BCAE7"/>
<rect x="810.95" y="252.8" width="3.2" height="21.5" fill="#077A9D"/>
<rect x="810.95" y="248.1" width="3.2" height="4.7" fill="#FFAB00"/>
<rect x="810.95" y="237.2" width="3.2" height="10.9" fill="#00A972"/>
<rect x="810.95" y="223.9" width="3.2" height="13.3" fill="#FF3621"/>
<rect x="810.95" y="210.6" width="3.2" height="13.3" fill="#8BCAE7"/>
<rect x="815.04" y="228.1" width="3.2" height="46.2" fill="#077A9D"/>
<rect x="815.04" y="223.4" width="3.2" height="4.7" fill="#FFAB00"/>
<rect x="815.04" y="211.9" width="3.2" height="11.5" fill="#00A972"/>
<rect x="815.04" y="186" width="3.2" height="25.9" fill="#FF3621"/>
<rect x="815.04" y="163.8" width="3.2" height="22.2" fill="#8BCAE7"/>
<rect x="819.12" y="230.9" width="3.2" height="43.4" fill="#077A9D"/>
<rect x="819.12" y="226.7" width="3.2" height="4.2" fill="#FFAB00"/>
<rect x="819.12" y="213" width="3.2" height="13.7" fill="#00A972"/>
<rect x="819.12" y="191.75" width="3.2" height="21.25" fill="#FF3621"/>
<rect x="819.12" y="177" width="3.2" height="14.75" fill="#8BCAE7"/>
<rect x="823.2" y="246.6" width="3.2" height="27.7" fill="#077A9D"/>
<rect x="823.2" y="242.7" width="3.2" height="3.9" fill="#FFAB00"/>
<rect x="823.2" y="230.6" width="3.2" height="12.1" fill="#00A972"/>
<rect x="823.2" y="204" width="3.2" height="26.6" fill="#FF3621"/>
<rect x="823.2" y="187.2" width="3.2" height="16.8" fill="#8BCAE7"/>
<rect x="827.29" y="245" width="3.2" height="29.3" fill="#077A9D"/>
<rect x="827.29" y="241.1" width="3.2" height="3.9" fill="#FFAB00"/>
<rect x="827.29" y="228.1" width="3.2" height="13" fill="#00A972"/>
<rect x="827.29" y="210.3" width="3.2" height="17.8" fill="#FF3621"/>
<rect x="827.29" y="198.9" width="3.2" height="11.4" fill="#8BCAE7"/>
<rect x="831.38" y="265.6" width="3.2" height="8.7" fill="#077A9D"/>
<rect x="831.38" y="263.75" width="3.2" height="1.85" fill="#FFAB00"/>
<rect x="831.38" y="249.4" width="3.2" height="14.35" fill="#00A972"/>
<rect x="831.38" y="234.1" width="3.2" height="15.3" fill="#FF3621"/>
<rect x="831.38" y="227.5" width="3.2" height="6.6" fill="#8BCAE7"/>
<rect x="835.46" y="268" width="3.2" height="6.3" fill="#077A9D"/>
<rect x="835.46" y="266.1" width="3.2" height="1.9" fill="#FFAB00"/>
<rect x="835.46" y="254.4" width="3.2" height="11.7" fill="#00A972"/>
<rect x="835.46" y="245" width="3.2" height="9.4" fill="#FF3621"/>
<rect x="835.46" y="240" width="3.2" height="5" fill="#8BCAE7"/>
<rect x="839.55" y="248.9" width="3.2" height="25.4" fill="#077A9D"/>
<rect x="839.55" y="245" width="3.2" height="3.9" fill="#FFAB00"/>
<rect x="839.55" y="231.7" width="3.2" height="13.3" fill="#00A972"/>
<rect x="839.55" y="209.4" width="3.2" height="22.3" fill="#FF3621"/>
<rect x="839.55" y="125.8" width="3.2" height="83.6" fill="#8BCAE7"/>
<rect x="843.63" y="238" width="3.2" height="36.3" fill="#077A9D"/>
<rect x="843.63" y="233.75" width="3.2" height="4.25" fill="#FFAB00"/>
<rect x="843.63" y="224.4" width="3.2" height="9.35" fill="#00A972"/>
<rect x="843.63" y="202.8" width="3.2" height="21.6" fill="#FF3621"/>
<rect x="843.63" y="184.9" width="3.2" height="17.9" fill="#8BCAE7"/>
<rect x="847.71" y="235.3" width="3.2" height="39" fill="#077A9D"/>
<rect x="847.71" y="230.2" width="3.2" height="5.1" fill="#FFAB00"/>
<rect x="847.71" y="207.8" width="3.2" height="22.4" fill="#00A972"/>
<rect x="847.71" y="181.3" width="3.2" height="26.5" fill="#FF3621"/>
<rect x="847.71" y="157.8" width="3.2" height="23.5" fill="#8BCAE7"/>
<rect x="851.8" y="239.5" width="3.2" height="34.8" fill="#077A9D"/>
<rect x="851.8" y="234.4" width="3.2" height="5.1" fill="#FFAB00"/>
<rect x="851.8" y="215.6" width="3.2" height="18.8" fill="#00A972"/>
<rect x="851.8" y="196.9" width="3.2" height="18.7" fill="#FF3621"/>
<rect x="851.8" y="169.9" width="3.2" height="27" fill="#8BCAE7"/>
<rect x="855.88" y="245" width="3.2" height="29.3" fill="#077A9D"/>
<rect x="855.88" y="241.1" width="3.2" height="3.9" fill="#FFAB00"/>
<rect x="855.88" y="214.1" width="3.2" height="27" fill="#00A972"/>
<rect x="855.88" y="184.9" width="3.2" height="29.2" fill="#FF3621"/>
<rect x="855.88" y="172.7" width="3.2" height="12.2" fill="#8BCAE7"/>
<rect x="859.97" y="268.75" width="3.2" height="5.55" fill="#077A9D"/>
<rect x="859.97" y="267.2" width="3.2" height="1.55" fill="#FFAB00"/>
<rect x="859.97" y="254.7" width="3.2" height="12.5" fill="#00A972"/>
<rect x="859.97" y="229" width="3.2" height="25.7" fill="#FF3621"/>
<rect x="859.97" y="222.8" width="3.2" height="6.2" fill="#8BCAE7"/>
<rect x="864.06" y="267.7" width="3.2" height="6.6" fill="#077A9D"/>
<rect x="864.06" y="266.1" width="3.2" height="1.6" fill="#FFAB00"/>
<rect x="864.06" y="257" width="3.2" height="9.1" fill="#00A972"/>
<rect x="864.06" y="248.6" width="3.2" height="8.4" fill="#FF3621"/>
<rect x="864.06" y="239.8" width="3.2" height="8.8" fill="#8BCAE7"/>
<rect x="868.14" y="245.8" width="3.2" height="28.5" fill="#077A9D"/>
<rect x="868.14" y="240.3" width="3.2" height="5.5" fill="#FFAB00"/>
<rect x="868.14" y="225" width="3.2" height="15.3" fill="#00A972"/>
<rect x="868.14" y="205.2" width="3.2" height="19.8" fill="#FF3621"/>
<rect x="868.14" y="190.3" width="3.2" height="14.9" fill="#8BCAE7"/>
<rect x="872.23" y="238.4" width="3.2" height="35.9" fill="#077A9D"/>
<rect x="872.23" y="233.75" width="3.2" height="4.65" fill="#FFAB00"/>
<rect x="872.23" y="218.1" width="3.2" height="15.65" fill="#00A972"/>
<rect x="872.23" y="200.9" width="3.2" height="17.2" fill="#FF3621"/>
<rect x="872.23" y="171.9" width="3.2" height="29" fill="#8BCAE7"/>
<rect x="876.31" y="225.5" width="3.2" height="48.8" fill="#077A9D"/>
<rect x="876.31" y="221.25" width="3.2" height="4.25" fill="#FFAB00"/>
<rect x="876.31" y="201.25" width="3.2" height="20" fill="#00A972"/>
<rect x="876.31" y="168" width="3.2" height="33.25" fill="#FF3621"/>
<rect x="876.31" y="133.6" width="3.2" height="34.4" fill="#8BCAE7"/>
<rect x="880.39" y="232.5" width="3.2" height="41.8" fill="#077A9D"/>
<rect x="880.39" y="225" width="3.2" height="7.5" fill="#FFAB00"/>
<rect x="880.39" y="204.7" width="3.2" height="20.3" fill="#00A972"/>
<rect x="880.39" y="157.5" width="3.2" height="47.2" fill="#FF3621"/>
<rect x="880.39" y="132.1" width="3.2" height="25.4" fill="#8BCAE7"/>
<rect x="884.48" y="253.6" width="3.2" height="20.7" fill="#077A9D"/>
<rect x="884.48" y="251.25" width="3.2" height="2.35" fill="#FFAB00"/>
<rect x="884.48" y="239.5" width="3.2" height="11.75" fill="#00A972"/>
<rect x="884.48" y="215.8" width="3.2" height="23.7" fill="#FF3621"/>
<rect x="884.48" y="205.2" width="3.2" height="10.6" fill="#8BCAE7"/>
</svg>
<div class="t" style="left:246px;top:282.7px;font-size:7.8px;font-weight:700;color:#444;-webkit-text-stroke:0">ds</div>
<div class="t" style="left:702.2px;top:282.7px;font-size:7.8px;font-weight:700;color:#444;-webkit-text-stroke:0">ds</div>
<svg style="position:absolute;left:15.2px;top:302px" width="6" height="6" viewBox="0 0 16 16"><path d="M2.8 8A5.2 5.2 0 0 1 11.7 4.3" fill="none" stroke="#555" stroke-width="2.2"/><path d="M13.9 1.6v5h-5z" fill="#555"/><path d="M13.2 8A5.2 5.2 0 0 1 4.3 11.7" fill="none" stroke="#555" stroke-width="2.2"/><path d="M2.1 14.4v-5h5z" fill="#555"/></svg>
<div class="t" style="left:22.8px;top:302.1px;font-size:8px;letter-spacing:-0.3px;color:#555;-webkit-text-stroke:0.06px #555">6 minutes ago</div>
<svg style="position:absolute;left:515px;top:302px" width="6" height="6" viewBox="0 0 16 16"><path d="M2.8 8A5.2 5.2 0 0 1 11.7 4.3" fill="none" stroke="#555" stroke-width="2.2"/><path d="M13.9 1.6v5h-5z" fill="#555"/><path d="M13.2 8A5.2 5.2 0 0 1 4.3 11.7" fill="none" stroke="#555" stroke-width="2.2"/><path d="M2.1 14.4v-5h5z" fill="#555"/></svg>
<div class="t" style="left:522.5px;top:302.1px;font-size:8px;letter-spacing:-0.3px;color:#555;-webkit-text-stroke:0.06px #555">6 minutes ago</div>
<!-- legend -->
<div class="t" style="left:897.9px;top:110.5px;font-size:7.5px;font-weight:700;color:#444;-webkit-text-stroke:0">sku</div>
<div style="position:absolute;left:898px;top:122px;width:7px;height:7.3px;background:#077A9D"></div>
<div style="position:absolute;left:898px;top:133.6px;width:7px;height:7.3px;background:#FFAB00"></div>
<div style="position:absolute;left:898px;top:145.3px;width:7px;height:7.3px;background:#00A972"></div>
<div style="position:absolute;left:898px;top:157px;width:7px;height:7.3px;background:#FF3621"></div>
<div style="position:absolute;left:898px;top:168.8px;width:7px;height:7.3px;background:#8BCAE7"></div>
<div class="t" style="left:908px;top:121.8px;font-size:7px;color:#555">ALL_PURPOSE</div>
<div class="t" style="left:908px;top:133.5px;font-size:7px;color:#555">DLT</div>
<div class="t" style="left:908px;top:145.2px;font-size:7px;color:#555">JOBS</div>
<div class="t" style="left:908px;top:156.9px;font-size:7px;color:#555">MODEL_INFERENCE</div>
<div class="t" style="left:908px;top:168.6px;font-size:7px;color:#555">SQL</div>

<!-- bottom panels -->
<div class="p" style="left:4.2px;top:324.5px;width:157.9px;height:196px"></div>
<div class="p" style="left:170.8px;top:324.5px;width:324.4px;height:196px"></div>
<div class="p" style="left:504.3px;top:324.5px;width:491.2px;height:196px"></div>

<div class="t" style="left:16.2px;top:331.5px;font-size:9.2px;color:#333">Counter 1 - total dbu</div>
<div style="position:absolute;left:11.6px;top:386.8px;width:141.4px;height:28.9px;background:#E8E8E8"></div>
<div style="position:absolute;left:78.3px;top:415.9px;width:2px;height:2px;background:#111;border-radius:50%"></div>
<div style="position:absolute;left:27px;top:386px;width:1px;height:1px;background:#BBB"></div>
<div style="position:absolute;left:49.5px;top:386px;width:1px;height:1px;background:#BBB"></div>
<div style="position:absolute;left:95px;top:386px;width:1px;height:1px;background:#BBB"></div>
<div style="position:absolute;left:139px;top:386px;width:1px;height:1px;background:#BBB"></div>
<div class="t" style="left:4.2px;width:157.9px;text-align:center;top:422.5px;font-size:17.6px;line-height:21.5px;color:#5A6E7F;white-space:normal">total dbu<br>consumed</div>
<svg style="position:absolute;left:15.2px;top:507.2px" width="6" height="6" viewBox="0 0 16 16"><path d="M2.8 8A5.2 5.2 0 0 1 11.7 4.3" fill="none" stroke="#555" stroke-width="2.2"/><path d="M13.9 1.6v5h-5z" fill="#555"/><path d="M13.2 8A5.2 5.2 0 0 1 4.3 11.7" fill="none" stroke="#555" stroke-width="2.2"/><path d="M2.1 14.4v-5h5z" fill="#555"/></svg>
<div class="t" style="left:22.8px;top:507.1px;font-size:8px;letter-spacing:-0.3px;color:#555;-webkit-text-stroke:0.06px #555">6 minutes ago</div>

<div class="t" style="left:182.8px;top:331.5px;font-size:9.1px;color:#333">Pie 1 - usage per workspace</div>
<div class="t" style="left:314.2px;top:357px;font-size:7.5px;font-weight:700;color:#555;-webkit-text-stroke:0">sum(dbus)</div>
<svg class="abs" width="999" height="525">
<path d="M333.3 367.6 A52.4 52.4 0 0 1 334.12 367.61 L333.71 393.8 A26.2 26.2 0 0 0 333.3 393.8 Z" fill="#FF3621"/>
<path d="M334.12 367.61 A52.4 52.4 0 0 1 336.96 367.73 L335.13 393.86 A26.2 26.2 0 0 0 333.71 393.8 Z" fill="#077A9D"/>
<path d="M336.96 367.73 A52.4 52.4 0 0 1 339.87 368.01 L336.58 394.01 A26.2 26.2 0 0 0 335.13 393.86 Z" fill="#AB4057"/>
<path d="M339.87 368.01 A52.4 52.4 0 0 1 343.12 368.53 L338.21 394.26 A26.2 26.2 0 0 0 336.58 394.01 Z" fill="#FFAB00"/>
<path d="M343.12 368.53 A52.4 52.4 0 0 1 380.6 397.44 L356.95 408.72 A26.2 26.2 0 0 0 338.21 394.26 Z" fill="#99DDB4"/>
<path d="M380.6 397.44 A52.4 52.4 0 1 1 333.3 367.6 L333.3 393.8 A26.2 26.2 0 1 0 356.95 408.72 Z" fill="#00A972"/>
</svg>
<div class="t" style="left:185.7px;top:477.3px;font-size:7.6px;font-weight:700;color:#444;-webkit-text-stroke:0">workspace_id:</div>
<div style="position:absolute;left:250px;top:477.3px;width:7px;height:6.7px;background:#00A972"></div>
<div style="position:absolute;left:261px;top:478px;width:67.5px;height:5.2px;background:#ECECEC"></div>
<div style="position:absolute;left:334.5px;top:477.3px;width:7px;height:6.7px;background:#99DDB4"></div>
<div style="position:absolute;left:344.7px;top:478px;width:67.8px;height:5.2px;background:#ECECEC"></div>
<div style="position:absolute;left:185.2px;top:488.8px;width:7.2px;height:6.7px;background:#FFAB00"></div>
<div style="position:absolute;left:194.5px;top:490.4px;width:67.1px;height:5.1px;background:#E8E8E8"></div>
<div style="position:absolute;left:270px;top:488.8px;width:7.3px;height:6.7px;background:#AB4057"></div>
<div style="position:absolute;left:280px;top:490.4px;width:67.3px;height:5.1px;background:#E8E8E8"></div>
<div style="position:absolute;left:354px;top:488.8px;width:7.2px;height:6.7px;background:#077A9D"></div>
<div style="position:absolute;left:364px;top:490.4px;width:67.7px;height:5.1px;background:#E8E8E8"></div>
<div style="position:absolute;left:196px;top:489.6px;width:62px;height:1.1px;background:repeating-linear-gradient(to right,#B8B8B8 0 2px,transparent 2px 4.4px);opacity:0.7"></div>
<div style="position:absolute;left:282px;top:489.6px;width:62px;height:1.1px;background:repeating-linear-gradient(to right,#B8B8B8 0 2px,transparent 2px 4.4px);opacity:0.7"></div>
<div style="position:absolute;left:366px;top:489.6px;width:62px;height:1.1px;background:repeating-linear-gradient(to right,#B8B8B8 0 2px,transparent 2px 4.4px);opacity:0.7"></div>
<div style="position:absolute;left:479.7px;top:475.2px;width:3.7px;height:10.8px;background:#777;border-radius:2px"></div>
<svg style="position:absolute;left:181.6px;top:507.2px" width="6" height="6" viewBox="0 0 16 16"><path d="M2.8 8A5.2 5.2 0 0 1 11.7 4.3" fill="none" stroke="#555" stroke-width="2.2"/><path d="M13.9 1.6v5h-5z" fill="#555"/><path d="M13.2 8A5.2 5.2 0 0 1 4.3 11.7" fill="none" stroke="#555" stroke-width="2.2"/><path d="M2.1 14.4v-5h5z" fill="#555"/></svg>
<div class="t" style="left:189px;top:507.1px;font-size:8px;letter-spacing:-0.3px;color:#555;-webkit-text-stroke:0.06px #555">6 minutes ago</div>

<div class="t" style="left:516px;top:331.2px;font-size:9.4px;color:#333">Results - billing_list_prices</div>
<div style="position:absolute;left:516px;top:342.8px;width:467.7px;height:20.9px;background:#F5F6F8"></div>
<div style="position:absolute;left:822.4px;top:345px;width:0.8px;height:16px;background:#E6E8EB"></div>
<div style="position:absolute;left:903.9px;top:345px;width:0.8px;height:16px;background:#E6E8EB"></div>
<div class="t" style="left:525px;top:350.5px;font-size:8px;color:#333">sku_name</div>
<div class="t" style="left:831.3px;top:350.5px;font-size:8.2px;color:#333">currency_code</div>
<div class="t" style="left:913.2px;top:350.3px;font-size:8.2px;color:#333">pricing.default</div>
<div style="position:absolute;left:516px;top:364px;width:467.7px;height:118.3px;overflow:hidden">
<div style="position:absolute;left:-516px;top:-364px;width:999px;height:525px">
<div class="t" style="left:525px;top:370.4px;font-size:7.4px;-webkit-text-stroke:0.08px #333">PREMIUM_ALL_PURPOSE_SERVERLESS_COMPUTE_US_EAST_OHIO</div>
<div class="t" style="left:831.3px;top:370.4px;font-size:7.4px;-webkit-text-stroke:0.08px #333">USD</div>
<div style="position:absolute;left:516px;top:382.15px;width:442px;height:1px;background:#EEEFF1"></div>
<div class="t" style="left:525px;top:388.55px;font-size:7.4px;-webkit-text-stroke:0.08px #333">PREMIUM_ALL_PURPOSE_SERVERLESS_COMPUTE_US_WEST_OREGON</div>
<div class="t" style="left:831.3px;top:388.55px;font-size:7.4px;-webkit-text-stroke:0.08px #333">USD</div>
<div style="position:absolute;left:516px;top:400.3px;width:442px;height:1px;background:#EEEFF1"></div>
<div class="t" style="left:525px;top:406.7px;font-size:7.4px;-webkit-text-stroke:0.08px #333">PREMIUM_ALL_PURPOSE_SERVERLESS_COMPUTE_SA_BRAZIL</div>
<div class="t" style="left:831.3px;top:406.7px;font-size:7.4px;-webkit-text-stroke:0.08px #333">USD</div>
<div style="position:absolute;left:516px;top:418.45px;width:442px;height:1px;background:#EEEFF1"></div>
<div class="t" style="left:525px;top:424.85px;font-size:7.4px;-webkit-text-stroke:0.08px #333">PREMIUM_ALL_PURPOSE_SERVERLESS_COMPUTE_EUROPE_LONDON</div>
<div class="t" style="left:831.3px;top:424.85px;font-size:7.4px;-webkit-text-stroke:0.08px #333">USD</div>
<div style="position:absolute;left:516px;top:436.6px;width:442px;height:1px;background:#EEEFF1"></div>
<div class="t" style="left:525px;top:443px;font-size:7.4px;-webkit-text-stroke:0.08px #333">PREMIUM_ALL_PURPOSE_SERVERLESS_COMPUTE_US_WEST_CALIFORNIA</div>
<div class="t" style="left:831.3px;top:443px;font-size:7.4px;-webkit-text-stroke:0.08px #333">USD</div>
<div style="position:absolute;left:516px;top:454.75px;width:442px;height:1px;background:#EEEFF1"></div>
<div class="t" style="left:525px;top:461.15px;font-size:7.4px;-webkit-text-stroke:0.08px #333">PREMIUM_ALL_PURPOSE_SERVERLESS_COMPUTE_CANADA</div>
<div class="t" style="left:831.3px;top:461.15px;font-size:7.4px;-webkit-text-stroke:0.08px #333">USD</div>
<div style="position:absolute;left:516px;top:472.9px;width:442px;height:1px;background:#EEEFF1"></div>
<div class="t" style="left:525px;top:479.3px;font-size:7.4px;-webkit-text-stroke:0.08px #333">PREMIUM_ALL_PURPOSE_SERVERLESS_COMPUTE_EUROPE_IRELAND</div>
<div class="t" style="left:831.3px;top:479.3px;font-size:7.4px;-webkit-text-stroke:0.08px #333">USD</div>
</div></div>
<div style="position:absolute;left:958.3px;top:367.9px;width:25.4px;height:113.6px;background:#E8E8E8"></div>
<div style="position:absolute;left:696px;top:484.3px;width:13.7px;height:13.5px;background:#DCE7F2;border-radius:2px"></div>
<div class="t" style="left:700.5px;top:487.3px;font-size:8.6px;color:#2F5F8F;-webkit-text-stroke:0">1</div>
<div class="t" style="left:714.4px;top:487.3px;font-size:8.6px;color:#5F7281;-webkit-text-stroke:0">2</div>
<div class="t" style="left:728.6px;top:487.3px;font-size:8.6px;color:#5F7281;-webkit-text-stroke:0">3</div>
<div class="t" style="left:742.5px;top:487.3px;font-size:8.6px;color:#5F7281;-webkit-text-stroke:0">4</div>
<div class="t" style="left:756.7px;top:487.3px;font-size:8.6px;color:#5F7281;-webkit-text-stroke:0">5</div>
<div class="t" style="left:770px;top:488.5px;font-size:8px;color:#8A96A0;letter-spacing:1.6px">···</div>
<div class="t" style="left:790.4px;top:487.3px;font-size:8.6px;color:#5F7281;-webkit-text-stroke:0">12</div>
<svg style="position:absolute;left:808.4px;top:488.5px" width="4.5" height="6" viewBox="0 0 4.5 6"><path d="M0.6 0.5l3 2.5-3 2.5" fill="none" stroke="#666" stroke-width="0.8"/></svg>
<svg style="position:absolute;left:516.6px;top:507.2px" width="6" height="6" viewBox="0 0 16 16"><path d="M2.8 8A5.2 5.2 0 0 1 11.7 4.3" fill="none" stroke="#555" stroke-width="2.2"/><path d="M13.9 1.6v5h-5z" fill="#555"/><path d="M13.2 8A5.2 5.2 0 0 1 4.3 11.7" fill="none" stroke="#555" stroke-width="2.2"/><path d="M2.1 14.4v-5h5z" fill="#555"/></svg>
<div class="t" style="left:523.5px;top:507.1px;font-size:8px;letter-spacing:-0.3px;color:#555;-webkit-text-stroke:0.06px #555">9 minutes ago</div>

<!-- bottom fade -->
<div style="position:absolute;left:0;top:495px;width:999px;height:25.5px;background:linear-gradient(to bottom,rgba(0,0,0,0),rgba(0,0,0,0.035))"></div>
<div style="position:absolute;left:0;top:520.5px;width:999px;height:4.5px;background:#E4E5E7"></div>
</body></html>
